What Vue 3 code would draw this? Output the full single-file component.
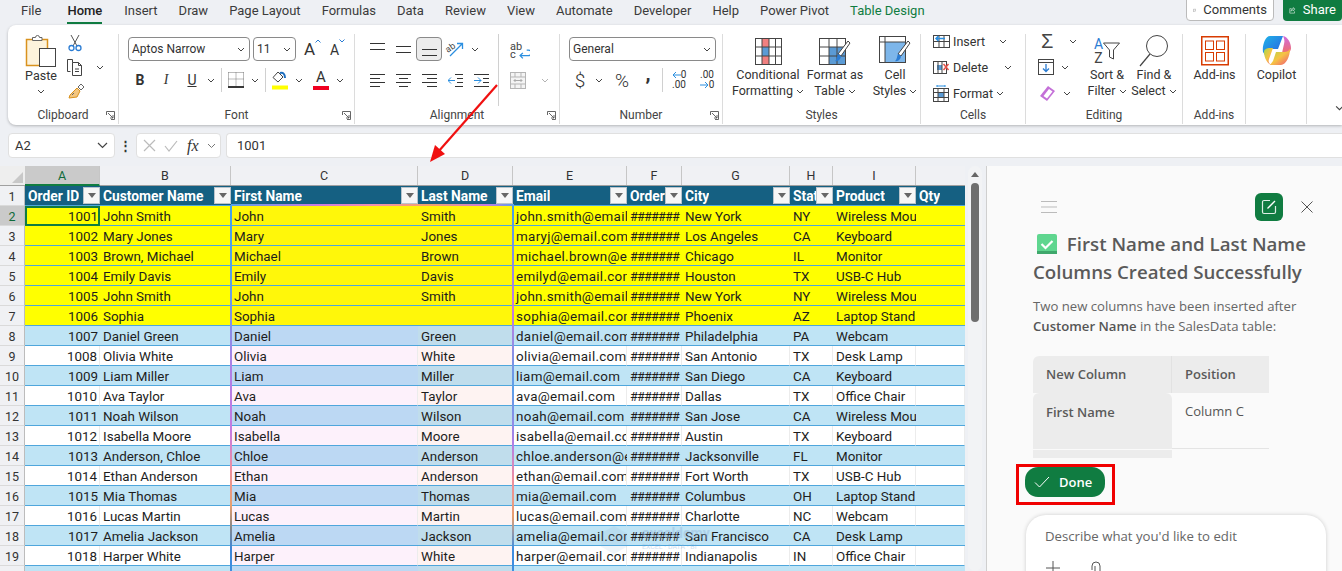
<script setup>
const tabs = ['File', 'Home', 'Insert', 'Draw', 'Page Layout', 'Formulas', 'Data', 'Review', 'View', 'Automate', 'Developer', 'Help', 'Power Pivot', 'Table Design']

const columns = [
  { key: 'A', width: 75 }, { key: 'B', width: 131 }, { key: 'C', width: 187 }, { key: 'D', width: 95 },
  { key: 'E', width: 114 }, { key: 'F', width: 55 }, { key: 'G', width: 108 }, { key: 'H', width: 43 },
  { key: 'I', width: 83 }, { key: '', width: 49 }
]
const headers = ['Order ID', 'Customer Name', 'First Name', 'Last Name', 'Email', 'Order', 'City', 'Stat', 'Product', 'Qty']

const rows = [
  ['1001', 'John Smith', 'John', 'Smith', 'john.smith@email.com', 'New York', 'NY', 'Wireless Mouse'],
  ['1002', 'Mary Jones', 'Mary', 'Jones', 'maryj@email.com', 'Los Angeles', 'CA', 'Keyboard'],
  ['1003', 'Brown, Michael', 'Michael', 'Brown', 'michael.brown@email.com', 'Chicago', 'IL', 'Monitor'],
  ['1004', 'Emily Davis', 'Emily', 'Davis', 'emilyd@email.com', 'Houston', 'TX', 'USB-C Hub'],
  ['1005', 'John Smith', 'John', 'Smith', 'john.smith@email.com', 'New York', 'NY', 'Wireless Mouse'],
  ['1006', 'Sophia', 'Sophia', '', 'sophia@email.com', 'Phoenix', 'AZ', 'Laptop Stand'],
  ['1007', 'Daniel Green', 'Daniel', 'Green', 'daniel@email.com', 'Philadelphia', 'PA', 'Webcam'],
  ['1008', 'Olivia White', 'Olivia', 'White', 'olivia@email.com', 'San Antonio', 'TX', 'Desk Lamp'],
  ['1009', 'Liam Miller', 'Liam', 'Miller', 'liam@email.com', 'San Diego', 'CA', 'Keyboard'],
  ['1010', 'Ava Taylor', 'Ava', 'Taylor', 'ava@email.com', 'Dallas', 'TX', 'Office Chair'],
  ['1011', 'Noah Wilson', 'Noah', 'Wilson', 'noah@email.com', 'San Jose', 'CA', 'Wireless Mouse'],
  ['1012', 'Isabella Moore', 'Isabella', 'Moore', 'isabella@email.com', 'Austin', 'TX', 'Keyboard'],
  ['1013', 'Anderson, Chloe', 'Chloe', 'Anderson', 'chloe.anderson@email.com', 'Jacksonville', 'FL', 'Monitor'],
  ['1014', 'Ethan Anderson', 'Ethan', 'Anderson', 'ethan@email.com', 'Fort Worth', 'TX', 'USB-C Hub'],
  ['1015', 'Mia Thomas', 'Mia', 'Thomas', 'mia@email.com', 'Columbus', 'OH', 'Laptop Stand'],
  ['1016', 'Lucas Martin', 'Lucas', 'Martin', 'lucas@email.com', 'Charlotte', 'NC', 'Webcam'],
  ['1017', 'Amelia Jackson', 'Amelia', 'Jackson', 'amelia@email.com', 'San Francisco', 'CA', 'Desk Lamp'],
  ['1018', 'Harper White', 'Harper', 'White', 'harper@email.com', 'Indianapolis', 'IN', 'Office Chair'],
  ['', '', '', '', '', '', '', '']
]

// 前6行黄色高亮，之后蓝白相间
function rowClass(i) {
  if (i < 6) return 'yellow'
  return i % 2 === 0 ? 'blue' : 'white'
}
</script>

<template>
  <div class="page">
    <svg class="defs" width="0" height="0">
      <symbol id="chev" viewBox="0 0 8 5"><path d="M1 1l3 3 3-3" fill="none" stroke="#444" stroke-width="1"/></symbol>
      <symbol id="launch" viewBox="0 0 9 9"><path d="M.5 4V.5H8.500V8.500H5M2 2l5 5M7 4v3H4" fill="none" stroke="#555" stroke-width=".9"/></symbol>
    </svg>

    <!-- 选项卡 -->
    <div class="tabs">
      <span v-for="t in tabs" :key="t" class="tab" :class="{ active: t === 'Home', design: t === 'Table Design' }">{{ t }}</span>
      <div class="tab-actions">
        <div class="comments">
          <svg width="13" height="13" viewBox="0 0 13 13"><path d="M1.500 1.500h10v7h-6l-2.500 3v-3h-1.500z" fill="none" stroke="#333"/></svg>
          Comments
        </div>
        <div class="share">
          <svg width="13" height="13" viewBox="0 0 13 13"><path d="M5 3H1.500v8.500h9V8M8 1l3.500 3L8 7V5.300C6 5.300 4.500 6 3.800 8c0-3 1.700-4.800 4.200-4.800z" fill="none" stroke="#fff"/></svg>
          Share
        </div>
      </div>
    </div>

    <!-- 功能区 -->
    <div class="ribbon">
      <section class="group g-clip">
        <div class="clip-body">
          <div class="paste">
            <svg width="32" height="33" viewBox="0 0 32 33">
              <rect x="1.500" y="5.500" width="21" height="26" fill="#fdf3dc" stroke="#d9921e" stroke-width="1.500"/>
              <path d="M7.500 6.500v-3h3a2 2 0 0 1 4 0h2.500v3z" fill="#fff" stroke="#666"/>
              <rect x="14.500" y="14.500" width="16" height="18" fill="#fff" stroke="#444"/>
            </svg>
            <span class="paste-label">Paste</span>
            <svg class="chev" width="8" height="5"><use href="#chev"/></svg>
          </div>
          <div class="clip-small">
            <svg class="cut" width="14" height="18" viewBox="0 0 14 18"><path d="M3 1l6 11M11 1L5 12" stroke="#555" fill="none"/><circle cx="3.500" cy="14" r="2.500" fill="none" stroke="#2b7cd3" stroke-width="1.300"/><circle cx="10.500" cy="14" r="2.500" fill="none" stroke="#2b7cd3" stroke-width="1.300"/></svg>
            <div class="copy-row">
              <svg width="17" height="17" viewBox="0 0 17 17"><path d="M5.500 3.500v-3h-5v12h3M5.500 3.500h6l3 3v10h-9z M11.500 3.500v3h3M8 10h4M8 12.500h4" fill="none" stroke="#444"/></svg>
              <svg class="chev" width="8" height="5"><use href="#chev"/></svg>
            </div>
            <svg width="18" height="18" viewBox="0 0 18 18"><path d="M10 5l3 3-3 6-8 1 1-3z" fill="#f3c680" stroke="#d9921e"/><path d="M11 4l3-3 3 3-3 3zM5 12l2-2" fill="#fff" stroke="#666"/></svg>
          </div>
        </div>
        <div class="label">Clipboard</div>
        <svg class="launch" width="9" height="9"><use href="#launch"/></svg>
      </section>

      <section class="group g-font">
        <div class="tool-rows">
          <div class="row">
            <div class="select font-name">Aptos Narrow<svg class="chev" width="8" height="5"><use href="#chev"/></svg></div>
            <div class="select font-size">11<svg class="chev" width="8" height="5"><use href="#chev"/></svg></div>
            <div class="grow"><span class="big-a">A</span><svg width="6" height="4" viewBox="0 0 6 4"><path d="M.5 3.500L3 1l2.500 2.500" fill="none" stroke="#2b7cd3"/></svg></div>
            <div class="grow shrink"><span class="small-a">A</span><svg width="6" height="4" viewBox="0 0 6 4"><path d="M.5.500L3 3 5.500.500" fill="none" stroke="#2b7cd3"/></svg></div>
          </div>
          <div class="row">
            <span class="t letter b">B</span>
            <span class="t letter i">I</span>
            <span class="t letter u">U</span>
            <span class="c"><svg class="chev" width="8" height="5"><use href="#chev"/></svg></span>
            <span class="vsep"></span>
            <span class="t">
              <svg width="16" height="16" viewBox="0 0 16 16"><path d="M.500.500h15M.500.500v13M15.500.500v13M8 .500v13M.500 7h15" fill="none" stroke="#777" stroke-dasharray="1 1"/><path d="M0 15h16" stroke="#222" stroke-width="1.800"/></svg>
            </span>
            <span class="c"><svg class="chev" width="8" height="5"><use href="#chev"/></svg></span>
            <span class="vsep"></span>
            <span class="t">
              <svg width="18" height="20" viewBox="0 0 18 20"><path d="M7 2L2 7.500 7 12l5-5z" fill="#fff" stroke="#444"/><path d="M9 3c3-1 5 1 5 5" fill="none" stroke="#1f6fc0" stroke-width="2"/><rect x="1" y="15.500" width="16" height="4" fill="#ffff00"/></svg>
            </span>
            <span class="c"><svg class="chev" width="8" height="5"><use href="#chev"/></svg></span>
            <span class="t color-a">A<i></i></span>
            <span class="c"><svg class="chev" width="8" height="5"><use href="#chev"/></svg></span>
          </div>
        </div>
        <div class="label">Font</div>
        <svg class="launch" width="9" height="9"><use href="#launch"/></svg>
      </section>

      <section class="group g-align">
        <div class="align-body">
          <div class="tool-rows">
            <div class="row">
              <span class="a"><svg width="15" height="13" viewBox="0 0 15 13"><path d="M0 .500h15M0 6.500h15" stroke="#333"/></svg></span>
              <span class="a"><svg width="15" height="13" viewBox="0 0 15 13"><path d="M0 3.500h15M0 9.500h15" stroke="#333"/></svg></span>
              <span class="a selected"><svg width="15" height="13" viewBox="0 0 15 13"><path d="M0 6.500h15M0 12.500h15" stroke="#333"/></svg></span>
              <span class="a">
                <svg width="20" height="18" viewBox="0 0 20 18"><text x="1" y="11" font-size="9" font-family="Roboto, sans-serif" fill="#444" transform="rotate(-35 5 9)">ab</text><path d="M5 16L17 4M12 3.500h5.500V9" fill="none" stroke="#2b8fe0" stroke-width="1.300"/></svg>
              </span>
              <span class="c"><svg class="chev" width="8" height="5"><use href="#chev"/></svg></span>
            </div>
            <div class="row">
              <span class="a"><svg width="15" height="13" viewBox="0 0 15 13"><path d="M0 .500h15M0 4.500h10M0 8.500h15M0 12.500h10" stroke="#333"/></svg></span>
              <span class="a"><svg width="15" height="13" viewBox="0 0 15 13"><path d="M0 .500h15M3 4.500h9M0 8.500h15M3 12.500h9" stroke="#333"/></svg></span>
              <span class="a"><svg width="15" height="13" viewBox="0 0 15 13"><path d="M0 .500h15M5 4.500h10M0 8.500h15M5 12.500h10" stroke="#333"/></svg></span>
              <span class="a"><svg width="15" height="13" viewBox="0 0 15 13"><path d="M7 .500h8M9 4.500h6M9 8.500h6M7 12.500h8" stroke="#333"/><path d="M7 6.500H0M3 3.500l-3 3 3 3" fill="none" stroke="#2b8fe0"/></svg></span>
              <span class="a"><svg width="15" height="13" viewBox="0 0 15 13"><path d="M0 .500h15M0 12.500h15M9 4.500h6M9 8.500h6" stroke="#333"/><path d="M0 6.500h7M4 3.500l3 3-3 3" fill="none" stroke="#2b8fe0"/></svg></span>
            </div>
          </div>
          <span class="vsep tall"></span>
          <div class="wrap-col">
            <div class="wrap-icon">
              <span>ab<br>c</span>
              <svg width="11" height="11" viewBox="0 0 10 10"><path d="M7 1h1.500a1.500 1.500 0 0 1 0 5H1M3.500 3.500L1 6l2.500 2.500" fill="none" stroke="#2b8fe0" stroke-width="1.200"/></svg>
            </div>
            <div class="merge-row">
              <svg width="16" height="17" viewBox="0 0 16 17"><rect x=".500" y=".500" width="15" height="16" fill="#f4f4f4" stroke="#b5b5b5"/><path d="M.500 5h15M.500 12h15M5 .500V5M11 .500V5M5 12v5M11 12v5" stroke="#b5b5b5"/><path d="M4 8.500h8M5.500 7L4 8.500 5.500 10M10.500 7L12 8.500 10.500 10" fill="none" stroke="#aaa"/></svg>
              <svg class="chev faded" width="8" height="5"><use href="#chev"/></svg>
            </div>
          </div>
        </div>
        <div class="label">Alignment</div>
        <svg class="launch" width="9" height="9"><use href="#launch"/></svg>
      </section>

      <section class="group g-number">
        <div class="tool-rows">
          <div class="row">
            <div class="select general">General<svg class="chev" width="8" height="5"><use href="#chev"/></svg></div>
          </div>
          <div class="row num-row">
            <span class="num dollar">$</span>
            <span class="c dollar-c"><svg class="chev" width="8" height="5"><use href="#chev"/></svg></span>
            <span class="num pct">%</span>
            <span class="num comma">,</span>
            <span class="vsep"></span>
            <span class="dec">
              <span class="dec-line"><svg width="9" height="8" viewBox="0 0 9 8"><path d="M9 4H1M4 1L1 4l3 3" fill="none" stroke="#2b8fe0"/></svg>0</span>
              <span class="dec-line">.00</span>
            </span>
            <span class="dec">
              <span class="dec-line">.00</span>
              <span class="dec-line"><svg width="9" height="8" viewBox="0 0 9 8"><path d="M0 4h8M5 1l3 3-3 3" fill="none" stroke="#2b8fe0"/></svg>0</span>
            </span>
          </div>
        </div>
        <div class="label">Number</div>
        <svg class="launch" width="9" height="9"><use href="#launch"/></svg>
      </section>

      <section class="group g-styles">
        <div class="big-tools">
          <div class="big cond">
            <svg width="27" height="33" viewBox="0 0 27 33">
              <rect x=".500" y="4.500" width="26" height="26" fill="#fff" stroke="#444"/>
              <rect x="7" y="5" width="7" height="8" fill="#f08080"/><rect x="7" y="13" width="7" height="9" fill="#5b9bd5"/><rect x="7" y="22" width="7" height="8" fill="#f08080"/>
              <path d="M7 4.500v26M14 4.500v26M20.500 4.500v26M.500 13h26M.500 22h26" stroke="#444" fill="none"/>
            </svg>
            <span>Conditional</span><span>Formatting <svg class="chev" width="8" height="5"><use href="#chev"/></svg></span>
          </div>
          <div class="big fmt">
            <svg width="32" height="33" viewBox="0 0 32 33">
              <rect x=".500" y="4.500" width="26" height="26" fill="#fff" stroke="#444"/>
              <rect x="10" y="13" width="16" height="17" fill="#5b9bd5"/>
              <path d="M10 4.500v26M18 4.500v26M.500 13h26M.500 22h26" stroke="#444" fill="none"/>
              <path d="M29 7l2 2-9 13-3-2z" fill="#fff" stroke="#444"/><path d="M19 20l3 2c0 3-3 6-6 5 2-1 2-5 3-7z" fill="#2b7cd3"/>
            </svg>
            <span>Format as</span><span>Table <svg class="chev" width="8" height="5"><use href="#chev"/></svg></span>
          </div>
          <div class="big cell-st">
            <svg width="32" height="33" viewBox="0 0 32 33">
              <rect x=".500" y="2.500" width="26" height="26" fill="#fff" stroke="#444"/>
              <rect x="6" y="8" width="20" height="20" fill="#7db6ea"/>
              <path d="M.500 8h26M6 2.500v26" stroke="#444" fill="none"/>
              <path d="M29 7l2 2-9 13-3-2z" fill="#fff" stroke="#444"/><path d="M19 20l3 2c0 3-3 6-6 5 2-1 2-5 3-7z" fill="#2b7cd3"/>
            </svg>
            <span>Cell</span><span>Styles <svg class="chev" width="8" height="5"><use href="#chev"/></svg></span>
          </div>
        </div>
        <div class="label">Styles</div>
      </section>

      <section class="group g-cells">
        <div class="cells-body">
          <div class="cell-tool c-insert">
            <svg width="17" height="16" viewBox="0 0 17 16"><rect x=".500" y="2.500" width="16" height="12" fill="#fff" stroke="#444"/><path d="M6 2.500v12M11 2.500v12M.500 8.500h16" stroke="#444"/><path d="M12 5.500H3M5.500 3L3 5.500 5.500 8" fill="none" stroke="#2b8fe0" stroke-width="1.500"/></svg>
            <span>Insert</span><svg class="chev" width="8" height="5"><use href="#chev"/></svg>
          </div>
          <div class="cell-tool c-delete">
            <svg width="17" height="16" viewBox="0 0 17 16"><rect x=".500" y="2.500" width="13" height="12" fill="#fff" stroke="#444"/><rect x="4" y="6" width="5" height="5" fill="#5b9bd5"/><path d="M5 2.500v12M9 2.500v12" stroke="#444"/><path d="M10.500 5l5 6M15.500 5l-5 6" stroke="#e5534b" stroke-width="1.500"/></svg>
            <span>Delete</span><svg class="chev" width="8" height="5"><use href="#chev"/></svg>
          </div>
          <div class="cell-tool c-format">
            <svg width="17" height="17" viewBox="0 0 17 17"><rect x=".500" y="3.500" width="15" height="13" fill="#fff" stroke="#444"/><rect x="5" y="7" width="6" height="6" fill="#5b9bd5"/><path d="M5 3.500v13M11 3.500v13M.500 7.500h15M.500 12.500h15" stroke="#444"/><path d="M4 1h8M4 0v2M12 0v2" stroke="#2b8fe0"/></svg>
            <span>Format</span><svg class="chev" width="8" height="5"><use href="#chev"/></svg>
          </div>
        </div>
        <div class="label">Cells</div>
      </section>

      <section class="group g-edit">
        <div class="edit-body">
          <div class="edit-small">
            <div class="edit-row sum"><span class="sigma">Σ</span><svg class="chev" width="8" height="5"><use href="#chev"/></svg></div>
            <div class="edit-row fill">
              <svg width="16" height="16" viewBox="0 0 16 16"><rect x=".500" y=".500" width="15" height="15" fill="#fff" stroke="#444"/><path d="M.500 3.500h15" stroke="#444"/><path d="M8 5v7M5 9.500L8 12.500l3-3" fill="none" stroke="#2b7cd3" stroke-width="1.300"/></svg>
              <svg class="chev" width="8" height="5"><use href="#chev"/></svg>
            </div>
            <div class="edit-row">
              <svg width="18" height="17" viewBox="0 0 18 17"><path d="M10 1l7 5-8 10-7-5z" fill="#c470d8"/><path d="M11 4l3.500 2.500-5.500 7L5.500 11z" fill="#fff"/></svg>
              <svg class="chev" width="8" height="5"><use href="#chev"/></svg>
            </div>
          </div>
          <div class="big sort">
            <div class="sort-icon">
              <span class="az"><em>A</em><br>Z</span>
              <svg width="17" height="20" viewBox="0 0 17 20"><path d="M.500 2h16l-6 7v9l-4-2V9z" fill="#fff" stroke="#444"/></svg>
            </div>
            <span>Sort &amp;</span><span>Filter <svg class="chev" width="8" height="5"><use href="#chev"/></svg></span>
          </div>
          <div class="big find">
            <svg width="30" height="33" viewBox="0 0 30 33"><circle cx="18" cy="12" r="10.500" fill="#fff" stroke="#444"/><path d="M11 20L1 32" stroke="#444" stroke-width="1.200"/></svg>
            <span>Find &amp;</span><span>Select <svg class="chev" width="8" height="5"><use href="#chev"/></svg></span>
          </div>
        </div>
        <div class="label">Editing</div>
      </section>

      <section class="group g-addins">
        <div class="big addin">
          <svg width="28" height="33" viewBox="0 0 28 33"><rect x=".750" y="2.750" width="26.500" height="28" fill="none" stroke="#d83b01" stroke-width="1.500"/><rect x="4.500" y="7" width="8" height="8.500" fill="none" stroke="#d83b01"/><rect x="15.500" y="7" width="8" height="8.500" fill="none" stroke="#d83b01"/><rect x="4.500" y="18.500" width="8" height="8.500" fill="none" stroke="#d83b01"/><rect x="15.500" y="18.500" width="8" height="8.500" fill="none" stroke="#d83b01"/></svg>
          <span>Add-ins</span>
        </div>
        <div class="label">Add-ins</div>
      </section>

      <section class="group g-copilot">
        <div class="big copilot">
          <svg width="32" height="33" viewBox="0 0 32 33">
            <defs>
              <linearGradient id="cpa" x1="0" y1="0" x2="1" y2="1"><stop offset="0" stop-color="#1fb4e8"/><stop offset="1" stop-color="#2c5fe0"/></linearGradient>
              <linearGradient id="cpb" x1="0" y1="0" x2="1" y2="1"><stop offset="0" stop-color="#a6d94a"/><stop offset=".5" stop-color="#f6c343"/><stop offset="1" stop-color="#f0527c"/></linearGradient>
              <linearGradient id="cpc" x1="0" y1="0" x2="0" y2="1"><stop offset="0" stop-color="#d06be0"/><stop offset="1" stop-color="#f0706c"/></linearGradient>
            </defs>
            <path d="M9 2h13l-5 13H9c-3 0-5 3-5 6l-2-3C1 12 4 2 9 2z" fill="url(#cpa)"/>
            <path d="M3 18c0-3 3-4 6-4h3l-4 11c-1 3 0 5 3 6-4 0-8-7-8-13z" fill="url(#cpb)"/>
            <path d="M22 2c5 1 8 7 8 12 0 3-2 5-6 5h-3l2-9c1-3 0-6-1-8z" fill="url(#cpc)"/>
            <path d="M15 18h8c3 0 5-1 6-3 0 7-4 16-9 16H9l3-4z" fill="url(#cpb)"/>
          </svg>
          <span>Copilot</span>
        </div>
      </section>
      <svg class="collapse" width="9" height="6"><use href="#chev"/></svg>
    </div>

    <!-- 编辑栏 -->
    <div class="formula">
      <div class="name-box">A2<svg width="11" height="7" viewBox="0 0 11 7"><path d="M1 1l4.500 4.500L10 1" fill="none" stroke="#444" stroke-width="1.200"/></svg></div>
      <span class="dots">⋮</span>
      <div class="fx-box">
        <svg width="13" height="13" viewBox="0 0 13 13"><path d="M1 1l11 11M12 1L1 12" stroke="#bbb" stroke-width="1.200"/></svg>
        <svg width="14" height="12" viewBox="0 0 14 12"><path d="M1 6l4 5 8-10" fill="none" stroke="#bbb" stroke-width="1.200"/></svg>
        <span class="fx">fx</span>
        <svg width="9" height="6" viewBox="0 0 9 6"><path d="M1 1l3.500 3.500L8 1" fill="none" stroke="#777"/></svg>
      </div>
      <div class="formula-input">1001</div>
    </div>

    <div class="main">
      <!-- 表格 -->
      <div class="sheet">
        <div class="col-heads">
          <div class="corner"><i></i></div>
          <div v-for="c in columns" :key="c.key" class="col-head" :class="{ sel: c.key === 'A' }" :style="{ width: c.width + 'px' }">{{ c.key }}</div>
        </div>
        <div class="sheet-row head-row">
          <div class="row-num">1</div>
          <div v-for="(h, i) in headers" :key="h" class="cell th" :style="{ width: columns[i].width + 'px' }">
            <span class="th-text">{{ h }}</span>
            <span v-if="h !== 'Qty'" class="filter"><i></i></span>
          </div>
        </div>
        <div v-for="(r, i) in rows" :key="i" class="sheet-row" :class="rowClass(i)">
          <div class="row-num" :class="{ sel: i === 0 }">{{ i + 2 }}</div>
          <div class="cell num-cell" :class="{ active: i === 0 }" :style="{ width: columns[0].width + 'px' }">{{ r[0] }}</div>
          <div class="cell" :style="{ width: columns[1].width + 'px' }">{{ r[1] }}</div>
          <div class="cell col-c" :style="{ width: columns[2].width + 'px' }">{{ r[2] }}</div>
          <div class="cell col-d" :style="{ width: columns[3].width + 'px' }">{{ r[3] }}</div>
          <div class="cell col-e" :style="{ width: columns[4].width + 'px' }">{{ r[4] }}</div>
          <div class="cell hash" :style="{ width: columns[5].width + 'px' }">{{ r[0] ? '#######' : '' }}</div>
          <div class="cell" :style="{ width: columns[6].width + 'px' }">{{ r[5] }}</div>
          <div class="cell" :style="{ width: columns[7].width + 'px' }">{{ r[6] }}</div>
          <div class="cell" :style="{ width: columns[8].width + 'px' }">{{ r[7] }}</div>
          <div class="cell" :style="{ width: columns[9].width + 'px' }"></div>
        </div>
        <!-- Copilot 高亮边框 -->
        <div class="glow glow-top"></div>
        <div class="glow glow-left"></div>
        <div class="glow glow-right"></div>
        <div class="mark">
          <svg width="28" height="32" viewBox="0 0 34 36"><path d="M17 1l16 9v16l-16 9-16-9V10z" fill="#8fb3d9" opacity=".35"/></svg>
          <span>exceldemy<br><small>EXCEL · DATA · BI</small></span>
        </div>
      </div>

      <div class="scroll">
        <i class="up"></i>
        <i class="thumb"></i>
      </div>

      <!-- 右侧面板 -->
      <aside class="pane">
        <div class="pane-top">
          <svg width="16" height="12" viewBox="0 0 16 12"><path d="M0 .500h16M0 6h16M0 11.500h16" stroke="#bbb"/></svg>
          <div class="new-btn">
            <svg width="16" height="16" viewBox="0 0 16 16"><path d="M9 1.500H3A1.500 1.500 0 0 0 1.500 3v10A1.500 1.500 0 0 0 3 14.500h10a1.500 1.500 0 0 0 1.500-1.500V7" fill="none" stroke="#dfeee5" stroke-width="1.200"/><path d="M6.500 9.500L14 2" stroke="#fff" stroke-width="1.300"/></svg>
          </div>
          <svg class="close" width="12" height="12" viewBox="0 0 12 12"><path d="M.500.500l11 11M11.500.500l-11 11" stroke="#555" stroke-width="1"/></svg>
        </div>
        <h2 class="title">
          <svg class="check" width="20" height="20" viewBox="0 0 20 20"><rect width="20" height="20" rx="2" fill="#5fd68f"/><rect y="17" width="20" height="3" fill="#3fa86c"/><path d="M4.500 10l4 4 7-7" fill="none" stroke="#fff" stroke-width="2.200"/></svg>
          First Name and Last Name Columns Created Successfully
        </h2>
        <p class="desc">Two new columns have been inserted after <b>Customer Name</b> in the SalesData table:</p>
        <div class="pane-table">
          <div class="pt-row pt-head">
            <div class="pt-a">New Column</div>
            <div class="pt-b">Position</div>
          </div>
          <div class="pt-row pt-first">
            <div class="pt-a">First Name</div>
            <div class="pt-b">Column C</div>
          </div>
          <div class="pt-row pt-next">
            <div class="pt-a"></div>
            <div class="pt-b"></div>
          </div>
        </div>
        <div class="done-box">
          <div class="done">
            <svg width="16" height="12" viewBox="0 0 16 12"><path d="M1 6.500l4.500 4.500L15 1" fill="none" stroke="#fff" stroke-width="1"/></svg>
            Done
          </div>
        </div>
        <div class="ask">
          <div class="ask-text">Describe what you'd like to edit</div>
          <div class="ask-icons">
            <svg width="14" height="14" viewBox="0 0 14 14"><path d="M7 0v14M0 7h14" stroke="#555"/></svg>
            <svg width="12" height="14" viewBox="0 0 12 14"><path d="M2 9V5a4 4 0 0 1 8 0v5a2.500 2.500 0 0 1-5 0V5" fill="none" stroke="#555"/></svg>
          </div>
        </div>
      </aside>
    </div>

    <!-- 红色箭头 -->
    <svg class="arrow-over" width="80" height="90" viewBox="0 0 80 90">
      <path d="M72 5L13 72" stroke="#f01010" stroke-width="2.200"/>
      <path d="M5 82l5-17 10 9z" fill="#f01010"/>
    </svg>
  </div>
</template>

<style>
html, body { margin: 0; background: #eef0f4; overflow: hidden; }
</style>

<style scoped>
.page {
  position: relative;
  width: 1342px;
  height: 571px;
  overflow: hidden;
  background: #eef0f4;
  font-family: Roboto, "Liberation Sans", sans-serif;
  color: #333;
}
.defs { position: absolute; }

/* tabs */
.tabs {
  height: 25px;
  display: flex;
  gap: 21px;
  padding-left: 21px;
  font-size: 13px;
  position: relative;
  line-height: 22px;
}
.tab { color: #3b3b3b; height: 23px; white-space: nowrap; }
.tab.active { color: #222; font-weight: 500; border-bottom: 2px solid #107c41; height: 22px; margin: 0 1px 0 5px; }
.tab.design { color: #107c41; }
.tab-actions {
  margin-left: auto;
  display: flex;
  gap: 9px;
  height: 22px;
  margin-top: -1px;
}
.comments, .share {
  display: flex;
  align-items: center;
  gap: 7px;
  border-radius: 0 0 4px 4px;
  padding: 0 6px;
  box-sizing: border-box;
}
.comments { width: 88px; background: #fff; border: 1px solid #bbb; color: #333; }
.share { width: 59px; background: #107c41; color: #fff; }

/* ribbon */
.ribbon {
  height: 100px;
  margin-left: 8px;
  background: #fff;
  border-radius: 8px 0 0 8px;
  box-shadow: 0 1px 3px rgba(0, 0, 0, .25);
  display: flex;
  position: relative;
  padding: 9px 0 0;
  box-sizing: border-box;
  font-size: 12.500px;
}
.group {
  position: relative;
  display: flex;
  flex-direction: column;
  border-right: 1px solid #dcdcdc;
  height: 90px;
  box-sizing: border-box;
}
.label {
  position: absolute;
  left: 0;
  right: 0;
  top: 72px;
  text-align: center;
  font-size: 12px;
  line-height: 18px;
  color: #444;
}
.launch { position: absolute; right: 3px; top: 77px; }
.chev { flex: none; display: inline-block; vertical-align: middle; }
.chev.faded { opacity: .4; }
.vsep { width: 1px; background: #d0d0d0; height: 24px; flex: none; }

.g-clip { width: 111px; }
.g-font { width: 236px; padding: 3px 0 0 9px; }
.g-align { width: 205px; padding: 3px 0 0 9px; }
.g-number { width: 163px; padding: 3px 0 0 9px; }
.g-styles { width: 198px; }
.g-cells { width: 105px; }
.g-edit { width: 157px; }
.g-addins { width: 63px; }
.g-copilot { width: 61px; }

/* clipboard */
.clip-body { display: flex; padding-left: 8px; }
.paste { width: 50px; display: flex; flex-direction: column; align-items: center; }
.paste-label { line-height: 16px; margin-top: 1px; }
.paste .chev { margin-top: 5px; }
.clip-small { margin-left: 1px; width: 42px; display: flex; flex-direction: column; gap: 7px; align-items: flex-start; box-sizing: border-box; }
.cut { margin-left: 1px; }
.copy-row { display: flex; align-items: center; gap: 12px; width: 40px; }

/* rows */
.tool-rows { display: flex; flex-direction: column; gap: 7px; }
.row { display: flex; align-items: center; height: 24px; }
.select {
  border: 1px solid #8a8a8a;
  border-radius: 4px;
  height: 24px;
  box-sizing: border-box;
  display: flex;
  align-items: center;
  justify-content: space-between;
  padding: 0 4px 0 3px;
  background: #fff;
  font-size: 12px;
}
.font-name { width: 122px; }
.font-size { width: 43px; margin-left: 3px; }
.grow { display: flex; align-items: flex-start; margin-left: 8px; width: 22px; }
.shrink { margin-left: 4px; }
.big-a { font-size: 17px; line-height: 20px; }
.small-a { font-size: 14px; line-height: 20px; margin-top: 1px; }
.t { width: 24px; height: 24px; display: flex; align-items: center; justify-content: center; flex: none; }
.c { width: 14px; display: flex; justify-content: center; flex: none; }
.letter { font-size: 14px; margin-right: 2px; }
.b { font-weight: 700; }
.i { font-style: italic; font-family: "Liberation Serif", serif; }
.u { text-decoration: underline; margin-right: 0; }
.row .vsep { margin: 0 2px 0 3px; }
.color-a { position: relative; font-size: 15px; flex-direction: column; line-height: 15px; margin-left: 3px; }
.color-a i { display: block; width: 16px; height: 4px; background: #f00020; margin-top: 1px; }

/* alignment */
.align-body { display: flex; }
.a { width: 26px; height: 24px; display: flex; align-items: center; justify-content: center; flex: none; box-sizing: border-box; }
.a.selected { background: #ececec; border: 1px solid #8a8a8a; border-radius: 4px; }
.align-body .vsep { height: 72px; margin: -3px 0 0 4px; }
.wrap-col { display: flex; flex-direction: column; padding-left: 11px; gap: 7px; }
.wrap-icon { display: flex; align-items: flex-end; height: 24px; padding-bottom: 2px; box-sizing: border-box; }
.wrap-icon span { font-size: 11px; line-height: 8px; color: #444; }
.wrap-icon svg { margin-left: -3px; margin-bottom: -1px; }
.merge-row { display: flex; align-items: center; gap: 15px; height: 24px; }

/* number */
.general { width: 147px; }
.num-row { padding-left: 4px; }
.num { font-size: 19px; font-weight: 300; color: #333; flex: none; text-align: center; }
.dollar { width: 14px; }
.dollar-c { margin-left: 5px; }
.pct { width: 26px; margin-left: 3px; }
.comma { width: 26px; font-weight: 900; line-height: 12px; height: 24px; }
.num-row .vsep { margin: 0 1px; }
.dec { width: 26px; margin-left: 2px; font-size: 10px; line-height: 10px; flex: none; display: flex; flex-direction: column; align-items: center; }
.dec-line { display: flex; align-items: center; }

/* styles */
.big-tools { display: flex; padding-left: 13px; }
.big { display: flex; flex-direction: column; align-items: center; line-height: 16px; white-space: nowrap; }
.big > svg:first-child, .sort-icon { height: 33px; }
.cond { width: 64px; }
.fmt { width: 70px; margin-left: 0; }
.cell-st { width: 50px; }

/* cells */
.cells-body { display: flex; flex-direction: column; gap: 6px; padding: 0 0 0 12px; margin-top: -3px; }
.cell-tool { display: flex; align-items: center; gap: 3px; height: 20px; }
.cell-tool span { width: 46px; }
.c-insert .chev { margin-left: -3px; }
.c-delete .chev { margin-left: 2px; }
.c-format .chev { margin-left: -6px; }

/* editing */
.edit-body { display: flex; padding-left: 11px; }
.edit-small { display: flex; flex-direction: column; gap: 6px; width: 40px; margin-top: -3px; padding-left: 1px; box-sizing: border-box; }
.edit-row { display: flex; align-items: center; gap: 7px; height: 20px; }
.sigma { font-size: 20px; line-height: 20px; width: 16px; font-family: "Liberation Sans", sans-serif; color: #444; font-weight: 300; margin-right: 7px; padding-left: 3px; }
.sort { width: 46px; margin-left: 7px; }
.sort-icon { display: flex; align-items: center; gap: 0; }
.az { font-size: 14px; line-height: 14px; color: #444; text-align: center; }
.az em { font-style: normal; color: #2b7cd3; }
.find { width: 48px; margin-left: 0; }

.addin { width: 63px; }
.copilot { width: 61px; }
.collapse { position: absolute; right: -2px; top: 80px; }

/* formula */
.formula {
  margin-top: 8px;
  height: 25px;
  display: flex;
  align-items: stretch;
  padding-left: 8px;
  font-size: 13px;
}
.name-box, .fx-box, .formula-input {
  background: #fff;
  border-radius: 4px;
  border: 1px solid #e0e0e0;
  box-sizing: border-box;
  display: flex;
  align-items: center;
}
.name-box { width: 107px; padding: 0 6px; justify-content: space-between; }
.dots { width: 21px; text-align: center; line-height: 25px; font-weight: 700; }
.fx-box { width: 85px; padding: 0 4px 0 6px; justify-content: space-between; }
.fx { font-family: "Liberation Serif", serif; font-style: italic; font-size: 16px; color: #333; }
.formula-input { flex: 1; margin-left: 5px; padding-left: 10px; border-right: none; border-radius: 4px 0 0 4px; }

/* sheet */
.main { display: flex; margin-top: 8px; height: 405px; }
.sheet { width: 965px; flex: none; position: relative; overflow: hidden; }
.col-heads { display: flex; height: 20px; background: #f0f1f4; border-bottom: 1px solid #a0a0a0; box-sizing: border-box; }
.corner { width: 25px; flex: none; position: relative; background: #eeeeee; }
.corner i { position: absolute; right: 2px; bottom: 2px; border-left: 11px solid transparent; border-bottom: 11px solid #c8c8c8; }
.col-head {
  box-sizing: border-box;
  text-align: center;
  font-size: 12.500px;
  line-height: 19px;
  border-right: 1px solid #c6c6c6;
  flex: none;
  color: #333;
}
.col-head.sel { background: #cacaca; color: #0f6b3a; border-bottom: 2px solid #107c41; height: 20px; }
.col-head:last-child { border-right: none; }
.sheet-row { display: flex; height: 20px; font-size: 13.400px; line-height: 21px; color: #1d1d1d; }
.row-num {
  width: 25px;
  flex: none;
  text-align: center;
  background: #f0f1f4;
  border-right: 1px solid #bcbcbc;
  border-bottom: 1px solid #dadada;
  box-sizing: border-box;
  font-size: 12.500px;
  color: #333;
}
.row-num.sel { background: #cacaca; color: #0f6b3a; }
.cell {
  flex: none;
  box-sizing: border-box;
  padding: 0 2px 0 3px;
  white-space: nowrap;
  overflow: hidden;
  border-bottom: 1px solid #4ea6dc;
}
.num-cell { text-align: right; }
.col-e { letter-spacing: .3px; }
.hash { font-size: 12.600px; letter-spacing: -.75px; }
.th {
  background: #156082;
  color: #fff;
  font-weight: 700;
  font-size: 13.800px;
  display: flex;
  justify-content: space-between;
  border-bottom: 1px solid #4ea6dc;
  padding-right: 0;
}
.th-text { overflow: hidden; }
.filter {
  width: 17px;
  height: 17px;
  flex: none;
  margin: 1px 0 0 -2px;
  background: #f6f6f6;
  border: 1px solid #b9c4cc;
  box-sizing: border-box;
  display: flex;
  align-items: center;
  justify-content: center;
  position: relative;
}
.filter i { border-left: 4px solid transparent; border-right: 4px solid transparent; border-top: 5px solid #666; }
.yellow .cell { background: #ffff00; }
.yellow .col-c, .yellow .col-d { background: #fff70a; }
.blue .cell { background: #bfe4f5; }
.blue .col-c { background: #bcd8f3; }
.blue .col-d { background: #c0ddec; }
.white .cell { background: #fff; border-right: 1px solid #ececec; }
.white .col-c { background: #fdf1fb; }
.white .col-d { background: #fef3f2; }
.cell.active { outline: 2px solid #107c41; outline-offset: -2px; position: relative; }

/* 高亮 */
.glow { position: absolute; pointer-events: none; }
.glow-top { left: 231px; top: 38px; width: 283px; height: 2px; background: linear-gradient(90deg, #5aa0e8, #c77ae0 30%, #ef8fb0 50%, #f3a36b 70%, #c77ae0 90%, #5aa0e8); }
.glow-left { left: 230px; top: 40px; width: 2px; height: 365px; background: linear-gradient(180deg, #43a0e8, #5aa0e8 20%, #b07fe6 45%, #c77ae0 62%, #ef8fa0 72%, #e8a070 82%, #888 88%, #3f86d8 94%, #3f8ee0); }
.glow-right { left: 512px; top: 40px; width: 2px; height: 365px; background: linear-gradient(180deg, #43a0e8, #c77ae0 28%, #5aa0e8 50%, #b07fe6 65%, #ef8fa0 75%, #e8a070 85%, #3f8ee0 94%); }
.mark {
  position: absolute;
  left: 600px;
  top: 358px;
  display: flex;
  gap: 14px;
  align-items: center;
  color: #8fb3d9;
  opacity: .4;
  font-size: 14px;
  font-weight: 700;
  line-height: 11px;
  pointer-events: none;
}
.mark small { font-size: 7px; font-weight: 400; }

.scroll {
  width: 14px;
  margin-left: 3px;
  flex: none;
  background: #f2f3f5;
  border-radius: 7px;
  display: flex;
  flex-direction: column;
  align-items: center;
}
.scroll .up { margin-top: 6px; border-left: 4px solid transparent; border-right: 4px solid transparent; border-bottom: 5px solid #666; }
.scroll .thumb { margin-top: 6px; width: 8px; height: 139px; background: #6e6e6e; border-radius: 4px; }

/* pane */
.pane {
  margin-left: 4px;
  flex: 1;
  background: #fafafa;
  border-left: 1px solid #cfcfcf;
  box-sizing: border-box;
  padding: 27px 0 0 46px;
  color: #555;
  font-family: "Open Sans", "Noto Sans", sans-serif;
  overflow: hidden;
}
.pane-top { display: flex; align-items: center; height: 28px; padding-left: 8px; }
.new-btn {
  margin-left: 198px;
  width: 28px;
  height: 28px;
  background: #107c41;
  border-radius: 6px;
  display: flex;
  align-items: center;
  justify-content: center;
}
.close { margin-left: 18px; }
.title {
  margin: 9px 0 0;
  width: 285px;
  font-size: 18.700px;
  line-height: 28px;
  font-weight: 600;
  color: #5a5a5a;
}
.check { vertical-align: -3px; margin: 0 5px 0 4px; }
.desc {
  margin: 10px 0 0;
  width: 280px;
  font-size: 13.150px;
  line-height: 20px;
  color: #666;
}
.desc b { font-weight: 600; color: #555; }
.pane-table { margin-top: 20px; width: 236px; height: 102px; overflow: hidden; font-size: 13px; }
.pt-row { display: flex; }
.pt-a { width: 139px; flex: none; box-sizing: border-box; padding-left: 13px; background: #ececec; font-weight: 600; color: #5a5a5a; }
.pt-b { flex: 1; padding-left: 13px; box-sizing: border-box; }
.pt-head { height: 37px; line-height: 37px; margin-bottom: 0; }
.pt-head .pt-a { border-radius: 6px 0 0 0; border-right: 1px solid #e2e2e2; }
.pt-head .pt-b { background: #ececec; font-weight: 600; color: #5a5a5a; }
.pt-first { height: 56px; line-height: 38px; }
.pt-first .pt-a { border-radius: 6px 6px 0 0; }
.pt-first .pt-b { border-bottom: 1px solid #e4e4e4; line-height: 36px; }
.pt-next { height: 9px; margin-top: 1px; }
.done-box {
  margin: 6px 0 0 -17px;
  width: 99px;
  height: 41px;
  border: 3px solid #f00000;
  box-sizing: border-box;
  padding: 0 7px 5px 6px;
}
.done {
  height: 30px;
  margin-top: 0;
  background: #107c41;
  border-radius: 13px;
  color: #fff;
  font-size: 13px;
  font-weight: 600;
  display: flex;
  align-items: center;
  gap: 9px;
  padding-left: 9px;
  box-sizing: border-box;
}
.ask {
  margin: 10px 0 0 -7px;
  width: 300px;
  height: 110px;
  background: #fff;
  border-radius: 20px;
  box-shadow: 0 0 4px rgba(0, 0, 0, .18);
  padding: 11px 0 0 19px;
  box-sizing: border-box;
  font-size: 13.200px;
  color: #666;
}
.ask-text { line-height: 20px; }
.ask-icons { display: flex; gap: 30px; margin-top: 15px; padding-left: 1px; }

.arrow-over { position: absolute; left: 425px; top: 80px; pointer-events: none; }
</style>
